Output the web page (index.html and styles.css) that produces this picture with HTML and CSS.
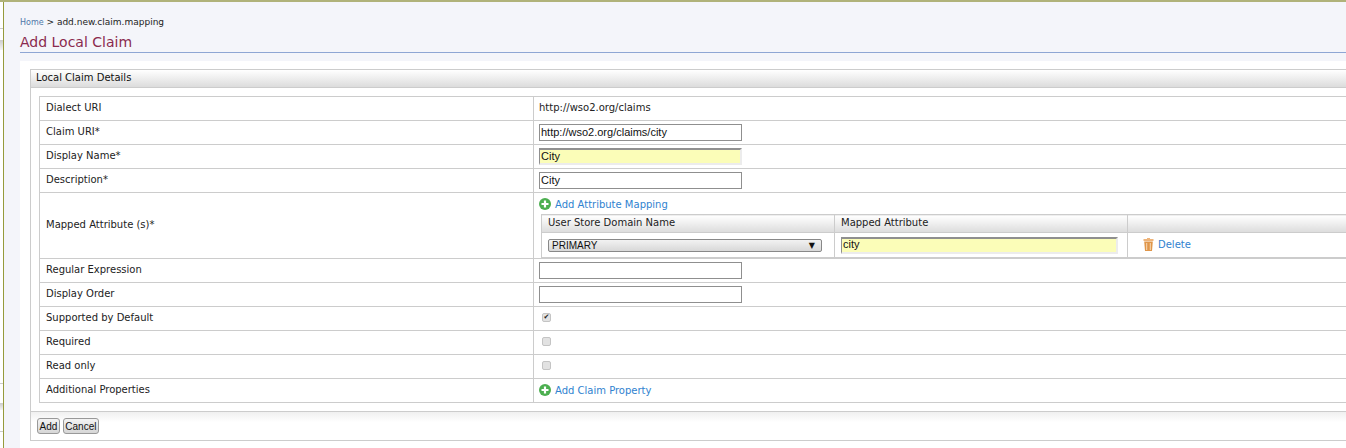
FILE: index.html
```html
<!DOCTYPE html>
<html lang="en">
<head>
    <title>Add Local Claim</title>
    <link rel="stylesheet" href="styles.css">
</head>
<body>
    <div class="shell">
        <div class="side-strip"></div>
        <div class="content">
            <div class="breadcrumb"><a href="#">Home</a> &gt; add.new.claim.mapping</div>
            <h2 class="page-title">Add Local Claim</h2>

            <div class="work-area">
                <div class="panel">
                    <div class="panel-head">Local Claim Details</div>
                    <div class="panel-body">
                        <table class="form-table">
                            <tr>
                                <td class="label-cell">Dialect URI</td>
                                <td class="value-text">http://wso2.org/claims</td>
                            </tr>
                            <tr>
                                <td class="label-cell">Claim URI*</td>
                                <td><input type="text" class="text-field" value="http://wso2.org/claims/city"></td>
                            </tr>
                            <tr>
                                <td class="label-cell">Display Name*</td>
                                <td><input type="text" class="text-field filled" value="City"></td>
                            </tr>
                            <tr>
                                <td class="label-cell">Description*</td>
                                <td><input type="text" class="text-field" value="City"></td>
                            </tr>
                            <tr class="mapping-row">
                                <td class="label-cell">Mapped Attribute (s)*</td>
                                <td>
                                    <a href="#" class="icon-link">
                                        <svg class="add-icon" viewBox="0 0 12 12"><circle cx="6" cy="6" r="6" fill="#4caf50"/><path d="M6 2.5v7M2.5 6h7" stroke="#fff" stroke-width="2.2"/></svg>
                                        Add Attribute Mapping
                                    </a>
                                    <table class="mapping-table">
                                        <thead>
                                            <tr>
                                                <th class="col-domain">User Store Domain Name</th>
                                                <th class="col-attr">Mapped Attribute</th>
                                                <th></th>
                                            </tr>
                                        </thead>
                                        <tbody>
                                            <tr>
                                                <td class="cell-domain">
                                                    <div class="select-box">PRIMARY<span class="select-arrow">&#9660;</span></div>
                                                </td>
                                                <td><input type="text" class="text-field filled attr-field" value="city"></td>
                                                <td class="cell-delete">
                                                    <a href="#" class="icon-link">
                                                        <svg class="trash-icon" viewBox="0 0 11 13"><path d="M4 0h3v1h3.5v2H.5V1H4z" fill="#eeb47a"/><path d="M1.2 3.5h8.6L9 13H2z" fill="#e0964a"/><path d="M3.7 5v7M7.3 5v7" stroke="#f7d9b5" stroke-width="1"/></svg>
                                                        Delete
                                                    </a>
                                                </td>
                                            </tr>
                                        </tbody>
                                    </table>
                                </td>
                            </tr>
                            <tr>
                                <td class="label-cell">Regular Expression</td>
                                <td><input type="text" class="text-field"></td>
                            </tr>
                            <tr>
                                <td class="label-cell">Display Order</td>
                                <td><input type="text" class="text-field"></td>
                            </tr>
                            <tr>
                                <td class="label-cell">Supported by Default</td>
                                <td><span class="check">&#10004;</span></td>
                            </tr>
                            <tr>
                                <td class="label-cell">Required</td>
                                <td><span class="check"></span></td>
                            </tr>
                            <tr>
                                <td class="label-cell">Read only</td>
                                <td><span class="check"></span></td>
                            </tr>
                            <tr>
                                <td class="label-cell">Additional Properties</td>
                                <td class="link-cell">
                                    <a href="#" class="icon-link">
                                        <svg class="add-icon" viewBox="0 0 12 12"><circle cx="6" cy="6" r="6" fill="#4caf50"/><path d="M6 2.5v7M2.5 6h7" stroke="#fff" stroke-width="2.2"/></svg>
                                        Add Claim Property
                                    </a>
                                </td>
                            </tr>
                        </table>
                    </div>
                    <div class="button-row">
                        <button type="button" class="btn">Add</button>
                        <button type="button" class="btn">Cancel</button>
                    </div>
                </div>
            </div>
        </div>
    </div>
</body>
</html>
```

FILE: styles.css
```css
html, body {
    margin: 0;
    padding: 0;
    height: 100%;
    overflow: hidden;
}

body {
    font-family: "DejaVu Sans", sans-serif;
    font-size: 10px;
    color: #222;
    background-color: #fff;
}

a {
    color: #2f82cf;
    text-decoration: none;
}

.shell {
    display: flex;
    height: 448px;
    border-top: 2px solid #b0b27a;
    box-sizing: border-box;
}

.side-strip {
    width: 3px;
    border-right: 1px solid #969b3c;
    background: linear-gradient(to bottom,
        #fff 0 26px, #ccc 26px 27px, #fff 27px 38px, #ccc 38px, #f4f4f4 48px,
        #fff 48px 381px, #ccc 381px 382px, #fff 382px 401px, #ccc 401px, #f4f4f4 408px,
        #fff 408px 429px, #ccc 429px 430px, #fff 430px);
}

.content {
    flex: 1;
    min-width: 0;
    background-color: #f4f5fa;
    padding-left: 16px;
}

.breadcrumb {
    margin-top: 13px;
    height: 14px;
    line-height: 14px;
    font-size: 9px;
}

.breadcrumb a {
    color: #4f78a8;
    font-size: 8px;
}

.page-title {
    margin: 4px 0 0;
    height: 19px;
    line-height: 19px;
    font-size: 14px;
    font-weight: normal;
    color: #8a2a4e;
    border-bottom: 1px solid #8ea6d4;
}

.work-area {
    margin-top: 8px;
    padding: 8px 0 0 10px;
    background-color: #fff;
    height: 400px;
    overflow: hidden;
}

.panel {
    width: 1400px;
    border: 1px solid #ccc;
    background-color: #fff;
}

.panel-head {
    height: 17px;
    line-height: 15px;
    padding-left: 5px;
    background: linear-gradient(#fff, #dcdcdc);
    border-bottom: 1px solid #ccc;
    color: #111;
}

.panel-body {
    padding: 8px;
    border-bottom: 1px solid #ccc;
}

.form-table {
    width: 100%;
    border-collapse: collapse;
}

.form-table > tbody > tr > td {
    border: 1px solid #ccc;
    height: 24px;
    padding: 0 5px;
    box-sizing: border-box;
}

.form-table > tbody > tr > td.label-cell {
    width: 494px;
    padding: 0 6px 2px;
}

.form-table > tbody > tr > td.value-text {
    padding-bottom: 2px;
}

.form-table > tbody > tr > td.link-cell {
    padding-top: 1px;
}

.text-field {
    display: block;
    width: 203px;
    height: 17px;
    box-sizing: border-box;
    border: 1px solid #8f8f8f;
    padding: 0 0 2px 1px;
    margin: 0;
    font-family: "Liberation Sans", sans-serif;
    font-size: 11px;
    background-color: #fff;
    color: #111;
}

.text-field.filled {
    background-color: #fbfdb8;
    border: 2px solid #ececec;
    border-top-color: #8f8f8f;
    border-left: 1px solid #8f8f8f;
}

.icon-link {
    display: inline-flex;
    align-items: center;
    gap: 4px;
}

.add-icon {
    width: 12px;
    height: 12px;
}

.trash-icon {
    width: 11px;
    height: 13px;
}

.form-table > tbody > tr.mapping-row > td {
    height: 66px;
}

.form-table > tbody > tr.mapping-row > td:last-child {
    vertical-align: top;
    padding-top: 5px;
    padding-bottom: 0;
}

.mapping-table {
    width: 807px;
    margin: 2px 0 0 2px;
    border-collapse: collapse;
}

.mapping-table th, .mapping-table td {
    border: 1px solid #ccc;
    padding: 0;
}

.mapping-table th {
    height: 18px;
    font-weight: normal;
    text-align: left;
    padding: 0 0 2px 6px;
    box-sizing: border-box;
    color: #222;
    background: linear-gradient(#fff, #dcdcdc);
}

.col-domain {
    width: 293px;
}

.col-attr {
    width: 293px;
}

.mapping-table tbody td {
    height: 23px;
}

.mapping-table td.cell-domain {
    padding: 0 12px 0 6px;
}

.select-box {
    display: flex;
    justify-content: space-between;
    height: 13px;
    line-height: 12px;
    box-sizing: border-box;
    border: 1px solid #888;
    border-radius: 2px;
    padding: 0 6px 0 3px;
    background: linear-gradient(#f2f2f2, #d8d8d8);
    font-family: "Liberation Sans", sans-serif;
    font-size: 10px;
    color: #111;
}

.select-arrow {
    font-size: 8px;
    font-family: "DejaVu Sans", sans-serif;
}

.attr-field {
    width: 277px;
    margin-left: 6px;
}

.mapping-table td.cell-delete {
    padding: 1px 0 0 15px;
}

.check {
    display: block;
    width: 7px;
    height: 7px;
    margin: 0 0 2px 3px;
    border: 1px solid #c4c4c4;
    border-radius: 2px;
    background-color: #e2e2e2;
    line-height: 7px;
    font-size: 7px;
    text-align: center;
    color: #222;
}

.button-row {
    height: 28px;
    padding: 6px 0 0 6px;
    box-sizing: border-box;
    display: flex;
    gap: 3px;
    align-items: flex-start;
    background: linear-gradient(#f0f0f0, #fff 10px);
}

.btn {
    height: 16px;
    padding: 0 1.5px;
    font-family: "Liberation Sans", sans-serif;
    font-size: 10px;
    color: #111;
    border: 1px solid #999;
    border-radius: 3px;
    background: linear-gradient(#f4f4f4, #d6d6d6);
}
```
